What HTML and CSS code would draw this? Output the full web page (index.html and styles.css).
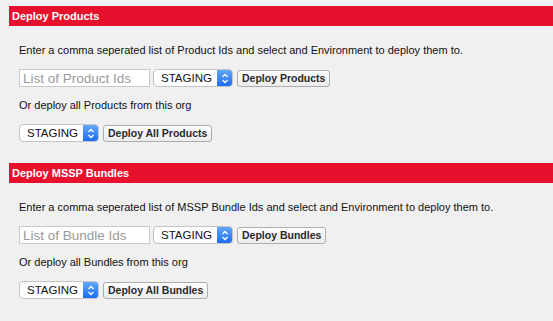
FILE: index.html
```html
<!DOCTYPE html>
<html lang="en">
<head>
    <meta charset="UTF-8">
    <meta name="viewport" content="width=device-width, initial-scale=1.0">
    <title>Deploy</title>
    <link rel="stylesheet" href="styles.css">
</head>
<body>
    <div class="panel">
        <div class="section">
            <h2 class="section-title">Deploy Products</h2>
            <p class="hint">Enter a comma seperated list of Product Ids and select and Environment to deploy them to.</p>
            <div class="controls">
                <input type="text" class="ids-input" placeholder="List of Product Ids">
                <div class="env-select">
                    <select>
                        <option>STAGING</option>
                        <option>PRODUCTION</option>
                    </select>
                    <span class="stepper">
                        <svg width="8" height="11" viewBox="0 0 8 11"><path d="M1.5 4 L4 1.5 L6.5 4 M1.5 7 L4 9.5 L6.5 7" fill="none" stroke="#fff" stroke-width="1.3"/></svg>
                    </span>
                </div>
                <button class="button">Deploy Products</button>
            </div>
            <p class="hint">Or deploy all Products from this org</p>
            <div class="controls">
                <div class="env-select">
                    <select>
                        <option>STAGING</option>
                        <option>PRODUCTION</option>
                    </select>
                    <span class="stepper">
                        <svg width="8" height="11" viewBox="0 0 8 11"><path d="M1.5 4 L4 1.5 L6.5 4 M1.5 7 L4 9.5 L6.5 7" fill="none" stroke="#fff" stroke-width="1.3"/></svg>
                    </span>
                </div>
                <button class="button">Deploy All Products</button>
            </div>
        </div>

        <div class="section">
            <h2 class="section-title">Deploy MSSP Bundles</h2>
            <p class="hint">Enter a comma seperated list of MSSP Bundle Ids and select and Environment to deploy them to.</p>
            <div class="controls">
                <input type="text" class="ids-input" placeholder="List of Bundle Ids">
                <div class="env-select">
                    <select>
                        <option>STAGING</option>
                        <option>PRODUCTION</option>
                    </select>
                    <span class="stepper">
                        <svg width="8" height="11" viewBox="0 0 8 11"><path d="M1.5 4 L4 1.5 L6.5 4 M1.5 7 L4 9.5 L6.5 7" fill="none" stroke="#fff" stroke-width="1.3"/></svg>
                    </span>
                </div>
                <button class="button">Deploy Bundles</button>
            </div>
            <p class="hint">Or deploy all Bundles from this org</p>
            <div class="controls">
                <div class="env-select">
                    <select>
                        <option>STAGING</option>
                        <option>PRODUCTION</option>
                    </select>
                    <span class="stepper">
                        <svg width="8" height="11" viewBox="0 0 8 11"><path d="M1.5 4 L4 1.5 L6.5 4 M1.5 7 L4 9.5 L6.5 7" fill="none" stroke="#fff" stroke-width="1.3"/></svg>
                    </span>
                </div>
                <button class="button">Deploy All Bundles</button>
            </div>
        </div>
    </div>
</body>
</html>
```

FILE: styles.css
```css
body {
    font-family: 'Liberation Sans', Arial, sans-serif;
    background-color: #f0f0f0;
    color: #111;
    margin: 0;
}

.panel {
    padding: 6px 0 15px 0;
    border-bottom: 1px solid #c6c6c6;
}

.section {
    padding-left: 9px;
}

.section + .section {
    margin-top: 21px;
}

.section-title {
    background-color: #e8112d;
    color: white;
    font-size: 11px;
    font-weight: bold;
    height: 20px;
    line-height: 20px;
    margin: 0;
    padding-left: 3px;
}

.hint {
    font-size: 11px;
    line-height: 16px;
    margin: 0 0 11px 10px;
}

.section-title + .hint {
    margin-top: 16px;
}

.controls {
    display: flex;
    align-items: center;
    gap: 4px;
    height: 18px;
    margin: 0 0 10px 10px;
}

.ids-input {
    box-sizing: border-box;
    width: 131px;
    height: 18px;
    border: 1px solid #c9c9c9;
    background: white;
    font-family: inherit;
    font-size: 13.5px;
    padding: 0 3px;
    margin-right: -1px;
}

.ids-input::placeholder {
    color: #9a9a9a;
}

.env-select {
    box-sizing: border-box;
    display: flex;
    width: 80px;
    height: 18px;
    background: white;
    border: 1px solid #c4c4c4;
    border-radius: 4px;
    overflow: hidden;
}

.env-select select {
    appearance: none;
    -webkit-appearance: none;
    flex: 1;
    min-width: 0;
    border: none;
    background: transparent;
    font-family: inherit;
    font-size: 11.5px;
    color: #111;
    padding: 0 0 0 7px;
    outline: none;
}

.stepper {
    width: 15px;
    display: flex;
    align-items: center;
    justify-content: center;
    background: linear-gradient(#62a6fa, #1c6ef2);
}

.button {
    box-sizing: border-box;
    height: 17px;
    background: linear-gradient(#fdfdfd, #ececec);
    border: 1px solid #adadad;
    border-radius: 3px;
    font-family: inherit;
    font-size: 10.5px;
    font-weight: bold;
    color: #2a2a2a;
    padding: 0 4px;
    cursor: pointer;
}
```
